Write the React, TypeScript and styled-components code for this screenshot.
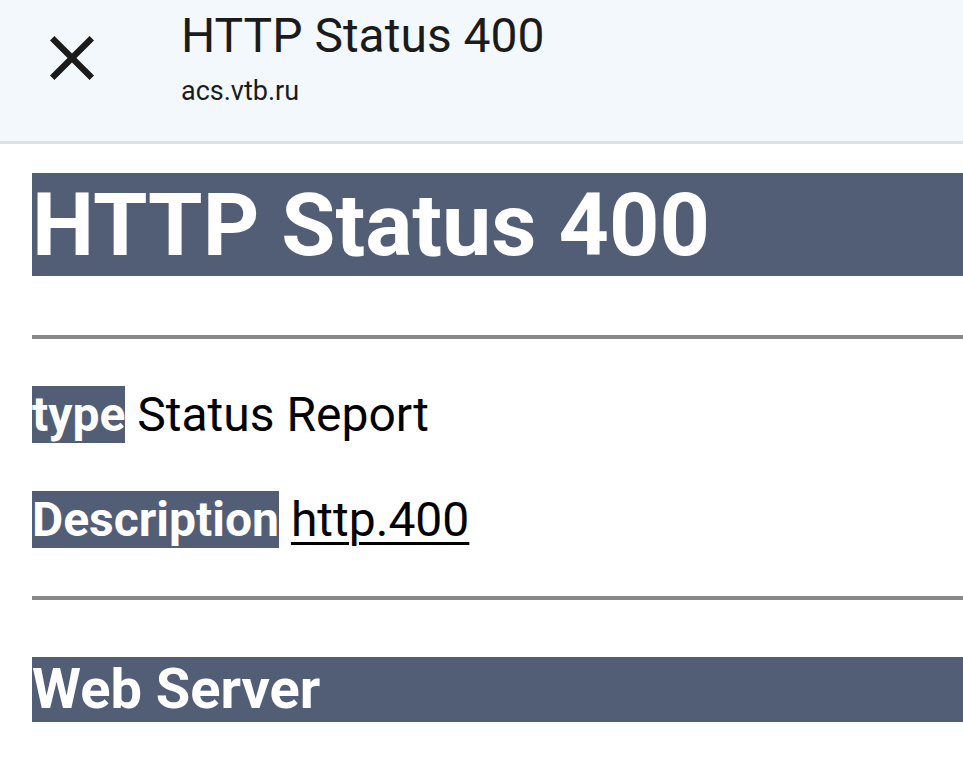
import styled, { createGlobalStyle } from 'styled-components';

const GlobalStyle = createGlobalStyle`
  html, body {
    margin: 0;
    padding: 0;
    background: #ffffff;
    font-family: Roboto, "Noto Sans", "Liberation Sans", sans-serif;
    overflow: hidden;
  }
`;

export default function App() {
  return (
    <>
      <GlobalStyle />
      <Page>
        <TabHeader>
          <CloseButton aria-label="Close">
            <svg width="44" height="44" viewBox="5 5 14 14">
              <path
                d="M19 6.41L17.59 5 12 10.59 6.41 5 5 6.41 10.59 12 5 17.59 6.41 19 12 13.41 17.59 19 19 17.59 13.41 12z"
                fill="currentColor"
              />
            </svg>
          </CloseButton>
          <TabTitles>
            <TabTitle>HTTP Status 400</TabTitle>
            <TabHost>acs.vtb.ru</TabHost>
          </TabTitles>
        </TabHeader>
        <Content>
          <Heading>HTTP Status 400</Heading>
          <Line $top={59} />
          <Field>
            <Label>type</Label> Status Report
          </Field>
          <Field>
            <Label>Description</Label> <ValueLink href="#">http.400</ValueLink>
          </Field>
          <Line $top={48} />
          <SubHeading>Web Server</SubHeading>
        </Content>
      </Page>
    </>
  );
}

const Page = styled.div`
  width: 963px;
  height: 772px;
  overflow: hidden;
`;

const TabHeader = styled.header`
  display: flex;
  align-items: flex-start;
  box-sizing: border-box;
  height: 144px;
  background: #f3f8fc;
  border-bottom: 3px solid #dcdfe3;
  color: #1b1b1b;
`;

const CloseButton = styled.button`
  display: flex;
  padding: 0;
  margin: 36px 0 0 50px;
  border: none;
  background: none;
  color: #1b1b1b;
`;

const TabTitles = styled.div`
  display: flex;
  flex-direction: column;
  margin-left: 87px;
  padding-top: 8px;
`;

const TabTitle = styled.div`
  font-size: 48px;
  line-height: 56px;
`;

const TabHost = styled.div`
  margin-top: 11px;
  font-size: 27px;
  line-height: 32px;
`;

const Content = styled.main`
  padding: 29px 0 0 32px;
  color: #000;
`;

const Heading = styled.h1`
  margin: 0;
  width: 1200px;
  background: #525d76;
  color: #fff;
  font-size: 88px;
  font-weight: 700;
  line-height: 103px;
  white-space: nowrap;
`;

const Line = styled.hr<{ $top: number }>`
  margin: ${p => p.$top}px 0 0;
  width: 1200px;
  height: 4px;
  border: none;
  background: #888888;
`;

const Field = styled.p`
  margin: 48px 0 0;
  font-size: 48px;
  line-height: 56px;
  white-space: nowrap;

  & + & {
    margin-top: 49px;
  }
`;

const Label = styled.b`
  background: #525d76;
  color: #fff;
  font-weight: 700;
`;

const ValueLink = styled.a`
  color: #000;
  text-decoration: underline;
  text-decoration-thickness: 3px;
  text-underline-offset: 6px;
`;

const SubHeading = styled.h3`
  margin: 57px 0 0;
  width: 1200px;
  background: #525d76;
  color: #fff;
  font-size: 56px;
  font-weight: 700;
  line-height: 65px;
  white-space: nowrap;
`;
